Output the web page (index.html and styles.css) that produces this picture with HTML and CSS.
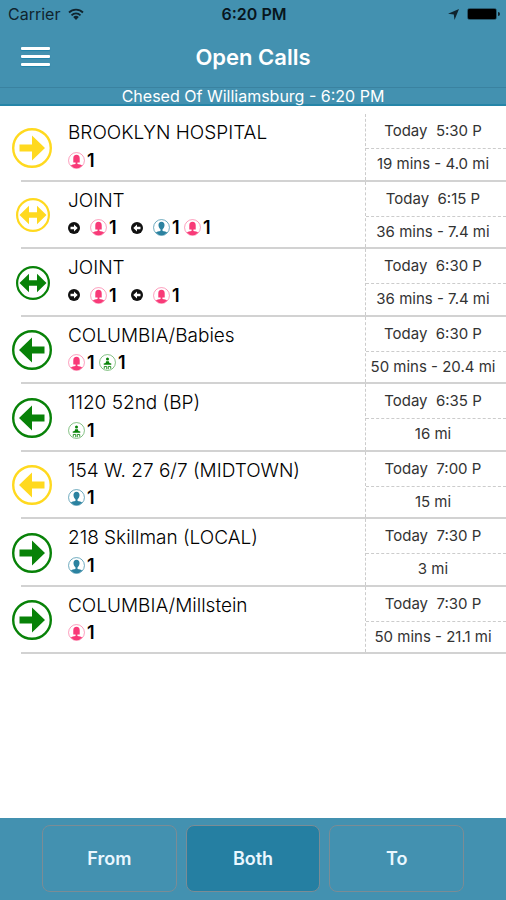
FILE: index.html
```html
<!DOCTYPE html>
<html lang="en">
<head>
<meta charset="utf-8">
<meta name="viewport" content="width=device-width, initial-scale=1">
<title>Open Calls</title>
<link rel="stylesheet" href="styles.css">
</head>
<body>
<svg class="sprite" aria-hidden="true">
  <symbol id="arrow-right" viewBox="0 0 40 40">
    <circle cx="20" cy="20" r="18.8" fill="none" stroke="currentColor" stroke-width="2.400"/>
    <path fill="currentColor" d="M7.500 16.500h12.500V7.500L33 20 20 32.500v-9H7.500z"/>
  </symbol>
  <symbol id="arrow-left" viewBox="0 0 40 40">
    <circle cx="20" cy="20" r="18.800" fill="none" stroke="currentColor" stroke-width="2.400"/>
    <path fill="currentColor" d="M32.500 16.500H20V7.500L7 20l13 12.500v-9h12.500z"/>
  </symbol>
  <symbol id="arrow-both" viewBox="0 0 34 34">
    <circle cx="17" cy="17" r="15.900" fill="none" stroke="currentColor" stroke-width="2.200"/>
    <path fill="currentColor" d="M3.500 17 13 7.800v6.500h8V7.800L30.500 17 21 26.200v-6.500h-8v6.500z"/>
  </symbol>
  <symbol id="dot-right" viewBox="0 0 12 12">
    <circle cx="6" cy="6" r="6" fill="currentColor"/>
    <path fill="#fff" d="M2.500 4.800H6V2.500L9.700 6 6 9.500V7.200H2.500z"/>
  </symbol>
  <symbol id="dot-left" viewBox="0 0 12 12">
    <circle cx="6" cy="6" r="6" fill="currentColor"/>
    <path fill="#fff" d="M9.500 4.800H6V2.500L2.300 6 6 9.500V7.200h3.500z"/>
  </symbol>
  <symbol id="woman" viewBox="0 0 18 18">
    <circle cx="9" cy="9" r="8.400" fill="none" stroke="currentColor" stroke-width=".8" opacity=".65"/>
    <path fill="currentColor" d="M9 3C6.700 3 5.600 4.500 5.600 6.800V11H8v1.800c-2 .2-4 .6-5 1.600A8 8 0 0 0 9 17.300a8 8 0 0 0 6-2.900c-1-1-3-1.400-5-1.600V11h2.400V6.800C12.400 4.500 11.300 3 9 3z"/>
  </symbol>
  <symbol id="man" viewBox="0 0 18 18">
    <circle cx="9" cy="9" r="8.400" fill="none" stroke="currentColor" stroke-width=".9" opacity=".8"/>
    <path fill="currentColor" d="M9 3C6.900 3 5.800 4.400 5.800 6.400c0 1.900.9 3.600 2.100 4.400v2c-2 .2-3.900.6-4.900 1.600A8 8 0 0 0 9 17.300a8 8 0 0 0 6-2.900c-1-1-2.900-1.400-4.900-1.600v-2c1.200-.8 2.100-2.500 2.100-4.400C12.200 4.400 11.100 3 9 3z"/>
  </symbol>
  <symbol id="child" viewBox="0 0 18 18">
    <circle cx="9" cy="9" r="8.400" fill="none" stroke="currentColor" stroke-width=".8" opacity=".65"/>
    <circle cx="9" cy="5.200" r="1.600" fill="currentColor"/>
    <path fill="currentColor" d="M7.500 7.600h3l.5 1.800 2 .6v1.400H5V10l2-.6z"/>
    <path fill="none" stroke="currentColor" stroke-width=".9" d="M5.600 15.600v-2.400h2.600v2.900M12.400 15.600v-2.400H9.800v2.900"/>
  </symbol>
</svg>

<header class="header">
  <div class="status">
    <div class="status-left">
      <span>Carrier</span>
      <svg class="wifi" viewBox="0 0 16 12" aria-hidden="true"><path fill="none" stroke="currentColor" stroke-width="1.800" d="M1 4.500a10 10 0 0 1 14 0M3.500 7.300a6.400 6.400 0 0 1 9 0"/><path fill="currentColor" d="M8 12 5.200 9.100a4 4 0 0 1 5.600 0z"/></svg>
    </div>
    <span class="clock">6:20 PM</span>
    <div class="status-right">
      <svg class="location" viewBox="0 0 11 11" aria-hidden="true"><path fill="currentColor" d="M11 0 6.500 11 5.800 5.500 0 4.800z"/></svg>
      <svg class="battery" viewBox="0 0 33 12" aria-hidden="true"><rect x=".5" y=".5" width="29" height="11" rx="2" fill="none" stroke="currentColor" opacity=".5"/><rect x="1" y="1" width="28" height="10" rx="1" fill="#000"/><path fill="currentColor" d="M31 4a2 2 0 0 1 0 4z"/></svg>
    </div>
  </div>
  <div class="nav">
    <button class="menu" type="button" aria-label="Menu"><i></i><i></i><i></i></button>
    <h1>Open Calls</h1>
  </div>
  <p class="place">Chesed Of Williamsburg - 6:20 PM</p>
</header>

<main>
<ul class="calls">
  <li class="call">
    <svg class="direction yellow"><use href="#arrow-right"/></svg>
    <div class="body">
      <div class="info"><h2>BROOKLYN HOSPITAL</h2>
        <div class="riders"><svg class="person pink"><use href="#woman"/></svg><b>1</b></div></div>
      <div class="trip"><span>Today  5:30 P</span><span>19 mins - 4.0 mi</span></div>
    </div>
  </li>
  <li class="call">
    <svg class="direction small yellow"><use href="#arrow-both"/></svg>
    <div class="body">
      <div class="info"><h2>JOINT</h2>
        <div class="riders"><svg class="dot"><use href="#dot-right"/></svg><svg class="person pink"><use href="#woman"/></svg><b>1</b><svg class="dot back"><use href="#dot-left"/></svg><svg class="person blue"><use href="#man"/></svg><b>1</b><svg class="person pink"><use href="#woman"/></svg><b>1</b></div></div>
      <div class="trip"><span>Today  6:15 P</span><span>36 mins - 7.4 mi</span></div>
    </div>
  </li>
  <li class="call">
    <svg class="direction small green"><use href="#arrow-both"/></svg>
    <div class="body">
      <div class="info"><h2>JOINT</h2>
        <div class="riders"><svg class="dot"><use href="#dot-right"/></svg><svg class="person pink"><use href="#woman"/></svg><b>1</b><svg class="dot back"><use href="#dot-left"/></svg><svg class="person pink"><use href="#woman"/></svg><b>1</b></div></div>
      <div class="trip"><span>Today  6:30 P</span><span>36 mins - 7.4 mi</span></div>
    </div>
  </li>
  <li class="call">
    <svg class="direction green"><use href="#arrow-left"/></svg>
    <div class="body">
      <div class="info"><h2>COLUMBIA/Babies</h2>
        <div class="riders"><svg class="person pink"><use href="#woman"/></svg><b>1</b><svg class="person green"><use href="#child"/></svg><b>1</b></div></div>
      <div class="trip"><span>Today  6:30 P</span><span>50 mins - 20.4 mi</span></div>
    </div>
  </li>
  <li class="call">
    <svg class="direction green"><use href="#arrow-left"/></svg>
    <div class="body">
      <div class="info"><h2>1120 52nd (BP)</h2>
        <div class="riders"><svg class="person green"><use href="#child"/></svg><b>1</b></div></div>
      <div class="trip"><span>Today  6:35 P</span><span>16 mi</span></div>
    </div>
  </li>
  <li class="call">
    <svg class="direction yellow"><use href="#arrow-left"/></svg>
    <div class="body">
      <div class="info"><h2>154 W. 27 6/7 (MIDTOWN)</h2>
        <div class="riders"><svg class="person blue"><use href="#man"/></svg><b>1</b></div></div>
      <div class="trip"><span>Today  7:00 P</span><span>15 mi</span></div>
    </div>
  </li>
  <li class="call">
    <svg class="direction green"><use href="#arrow-right"/></svg>
    <div class="body">
      <div class="info"><h2>218 Skillman (LOCAL)</h2>
        <div class="riders"><svg class="person blue"><use href="#man"/></svg><b>1</b></div></div>
      <div class="trip"><span>Today  7:30 P</span><span>3 mi</span></div>
    </div>
  </li>
  <li class="call">
    <svg class="direction green"><use href="#arrow-right"/></svg>
    <div class="body">
      <div class="info"><h2>COLUMBIA/Millstein</h2>
        <div class="riders"><svg class="person pink"><use href="#woman"/></svg><b>1</b></div></div>
      <div class="trip"><span>Today  7:30 P</span><span>50 mins - 21.1 mi</span></div>
    </div>
  </li>
</ul>
</main>

<footer class="tabs">
  <button type="button">From</button>
  <button type="button" class="active" aria-pressed="true">Both</button>
  <button type="button">To</button>
</footer>
</body>
</html>
```
FILE: styles.css
```css
* { box-sizing: border-box; }

body {
  margin: 0;
  min-height: 100vh;
  display: flex;
  flex-direction: column;
  background: #fff;
  color: #111;
  font-family: Inter, "Liberation Sans", sans-serif;
}

h1, h2, p, ul { margin: 0; padding: 0; }

.sprite { position: absolute; width: 0; height: 0; }

.header {
  background: #4391b0;
  color: #fff;
  border-bottom: 2px solid #2585a8;
}

.status {
  display: grid;
  grid-template-columns: 1fr auto 1fr;
  align-items: center;
  height: 28px;
  padding: 0 6px 0 8px;
  color: #10242e;
  font-size: 16px;
}
.status-left, .status-right { display: flex; align-items: center; gap: 8px; }
.status-right { justify-content: flex-end; }
.clock { color: #08161d; font-weight: 600; }
.wifi { width: 16px; height: 12px; }
.location { width: 11px; height: 11px; }
.battery { width: 33px; height: 12px; }

.nav {
  display: grid;
  grid-template-columns: 1fr auto 1fr;
  align-items: center;
  height: 60px;
  padding: 0 21px 2px;
  border-bottom: 1px solid #3a82a0;
}
.menu {
  display: flex;
  flex-direction: column;
  gap: 5px;
  width: 29px;
  padding: 0;
  border: 0;
  background: none;
}
.menu i { height: 3px; border-radius: 1px; background: #fff; box-shadow: 0 1px 1px #1f83aa; }
.nav h1 { font-size: 22px; font-weight: 600; line-height: 28px; }

.place { font-size: 16px; line-height: 16px; text-align: center; }

main { flex: 1; padding-top: 8px; }

.calls {
  display: grid;
  grid-auto-rows: 1fr;
  min-height: 540px;
  list-style: none;
}
.call {
  display: grid;
  grid-template-columns: 21px 1fr;
}
.direction {
  grid-area: 1 / 1;
  z-index: 1;
  align-self: center;
  width: 40px;
  height: 40px;
  margin-left: 12px;
}
.direction.small { width: 34px; height: 34px; margin-left: 16px; }

.body {
  grid-area: 1 / 2;
  display: flex;
  border-bottom: 2px solid #d2d2d2;
}
.info { flex: 1; padding: 7px 0 0 47px; }
.info h2 { font-size: 19px; font-weight: 300; line-height: 24px; color: #000; }

.riders { display: flex; align-items: center; height: 30px; }
.person { width: 17px; height: 17px; }
.riders b { width: 14px; padding-left: 2px; font-size: 18px; font-weight: 600; color: #000; }
.dot { width: 12px; height: 12px; margin-right: 10px; }
.dot.back { margin-left: 10px; }

.trip {
  display: grid;
  grid-template-rows: 35px 1fr;
  width: 141px;
  border-left: 1px dashed #ccc;
  font-size: 15px;
  line-height: 30px;
  text-align: center;
  white-space: pre;
  color: #333;
}
.trip span { padding-right: 6px; }
.trip span:first-child { border-bottom: 1px dashed #ccc; line-height: 34px; }

.yellow { color: #ffd91f; }
.green { color: #088208; }
.pink { color: #f83a78; }
.blue { color: #2b82a0; }

.tabs {
  display: flex;
  gap: 9px;
  height: 82px;
  padding: 7px 42px 8px;
  background: #4391b0;
}
.tabs button {
  flex: 1;
  border: 1px solid #7b8c95;
  border-radius: 8px;
  background: none;
  color: #eaf7ff;
  font: 600 18px Inter, "Liberation Sans", sans-serif;
}
.tabs .active { background: #257fa2; }
```
